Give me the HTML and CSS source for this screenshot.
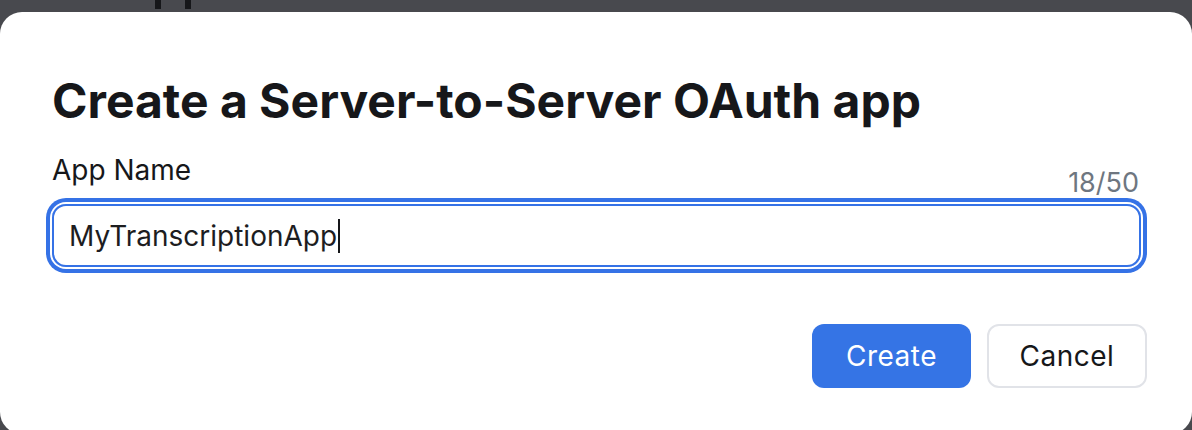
FILE: index.html
```html
<!DOCTYPE html>
<html lang="en">
<head>
<meta charset="utf-8">
<title>Create a Server-to-Server OAuth app</title>
<link rel="stylesheet" href="styles.css">
</head>
<body>
<div class="backdrop">
  <div class="behind"><span class="stem"></span><span class="stem"></span></div>
  <div class="dialog">
    <h1 class="title">Create a Server-to-Server OAuth app</h1>
    <div class="field">
      <div class="field-head">
        <label class="label" for="appname">App Name</label>
        <span class="counter">18/50</span>
      </div>
      <div class="input">
        <span class="value">MyTranscriptionApp</span><span class="caret"></span>
      </div>
    </div>
    <div class="actions">
      <button class="btn btn-primary">Create</button>
      <button class="btn btn-secondary">Cancel</button>
    </div>
  </div>
</div>
</body>
</html>
```
FILE: styles.css
```css
html, body {
  margin: 0;
  padding: 0;
}
body {
  width: 1192px;
  height: 430px;
  overflow: hidden;
  background: #48494e;
  font-family: Inter, "Noto Sans", sans-serif;
}
.backdrop {
  position: relative;
  height: 430px;
  padding-top: 12px;
  box-sizing: border-box;
  overflow: hidden;
}
.behind {
  position: absolute;
  top: 0;
  left: 155px;
  display: flex;
  gap: 24px;
}
.stem {
  display: block;
  width: 6px;
  height: 9px;
  background: #16171a;
}
.dialog {
  background: #fff;
  border-radius: 22px;
  height: 422px;
  box-sizing: border-box;
  padding: 60px 45px 0 52px;
}
.title {
  margin: 0;
  font-size: 48px;
  line-height: 58px;
  font-weight: 700;
  color: #16171a;
  letter-spacing: 0;
}
.field {
  margin-top: 23px;
}
.field-head {
  display: flex;
  justify-content: space-between;
  align-items: flex-start;
  padding-right: 8px;
}
.label {
  font-size: 28px;
  line-height: 34px;
  color: #16171a;
}
.counter {
  margin-top: 13px;
  font-size: 27px;
  line-height: 34px;
  color: #6e7680;
}
.input {
  margin-top: 4px;
  height: 63px;
  box-sizing: border-box;
  border: 2px solid #3572e6;
  border-radius: 14px;
  box-shadow: 0 0 0 2px #fff, 0 0 0 6px #3572e6;
  display: flex;
  align-items: center;
  padding-left: 15px;
  margin-right: 6px;
}
.value {
  font-size: 28px;
  color: #1d1d1f;
}
.caret {
  display: inline-block;
  width: 2px;
  height: 34px;
  background: #16171a;
  margin-left: 1px;
}
.actions {
  display: flex;
  justify-content: flex-end;
  gap: 16px;
  margin-top: 57px;
}
.btn {
  width: 160px;
  height: 64px;
  border-radius: 12px;
  font-family: Inter, "Noto Sans", sans-serif;
  font-size: 28px;
  letter-spacing: 0.5px;
  padding: 0;
  box-sizing: border-box;
}
.btn-primary {
  background: #3574e5;
  color: #fff;
  border: none;
  width: 159px;
}
.btn-secondary {
  background: #fff;
  color: #16171a;
  border: 2px solid #e1e3e8;
}
```
